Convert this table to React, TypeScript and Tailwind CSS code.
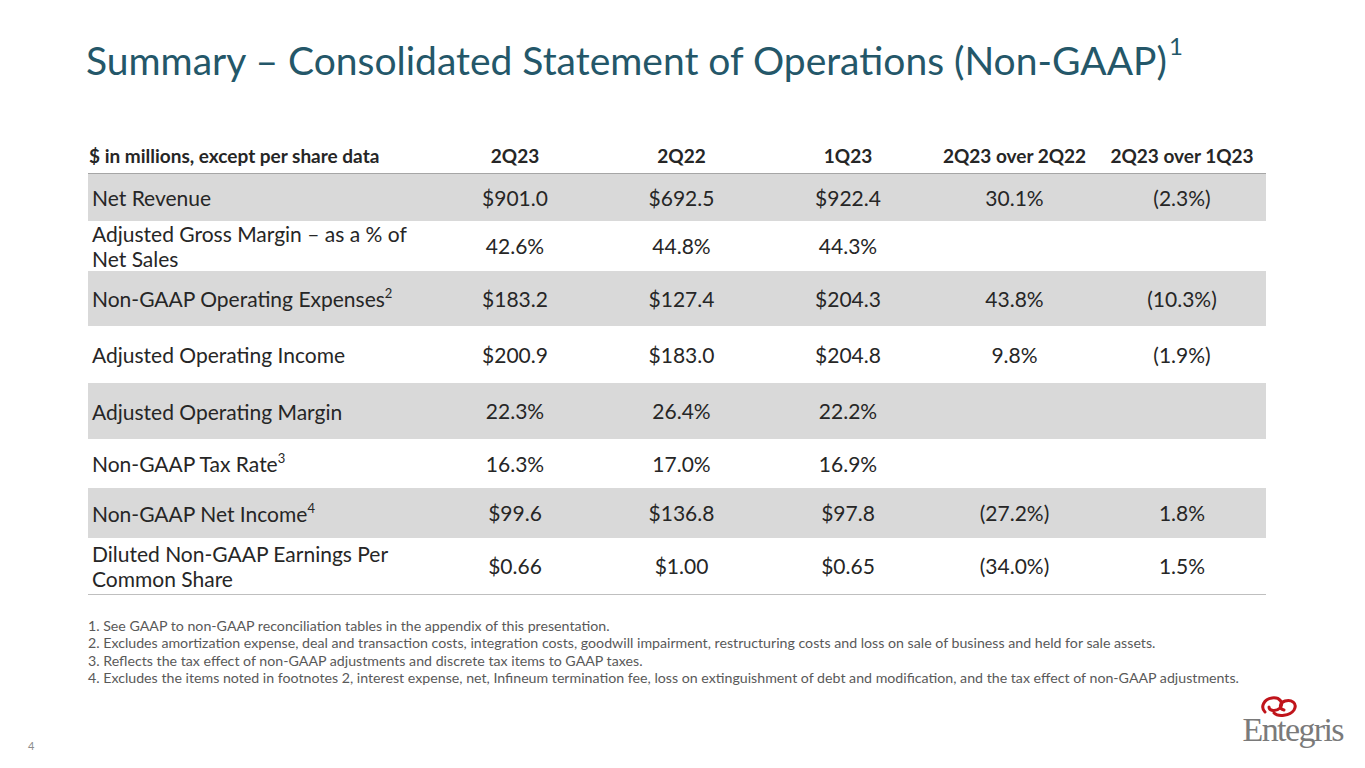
import React from "react";

type Row = {
  label: React.ReactNode;
  values: string[];
  shaded: boolean;
  height: string;
};

const rows: Row[] = [
  { label: "Net Revenue", values: ["$901.0", "$692.5", "$922.4", "30.1%", "(2.3%)"], shaded: true, height: "h-[48px]" },
  {
    label: (
      <>
        Adjusted Gross Margin – as a % of
        <br />
        Net Sales
      </>
    ),
    values: ["42.6%", "44.8%", "44.3%", "", ""],
    shaded: false,
    height: "h-[50px]",
  },
  {
    label: (
      <>
        Non-GAAP Operating Expenses<sup className="relative -top-[9px] text-[13px]">2</sup>
      </>
    ),
    values: ["$183.2", "$127.4", "$204.3", "43.8%", "(10.3%)"],
    shaded: true,
    height: "h-[55px]",
  },
  { label: "Adjusted Operating Income", values: ["$200.9", "$183.0", "$204.8", "9.8%", "(1.9%)"], shaded: false, height: "h-[57px]" },
  { label: "Adjusted Operating Margin", values: ["22.3%", "26.4%", "22.2%", "", ""], shaded: true, height: "h-[56px]" },
  {
    label: (
      <>
        Non-GAAP Tax Rate<sup className="relative -top-[9px] text-[13px]">3</sup>
      </>
    ),
    values: ["16.3%", "17.0%", "16.9%", "", ""],
    shaded: false,
    height: "h-[49px]",
  },
  {
    label: (
      <>
        Non-GAAP Net Income<sup className="relative -top-[9px] text-[13px]">4</sup>
      </>
    ),
    values: ["$99.6", "$136.8", "$97.8", "(27.2%)", "1.8%"],
    shaded: true,
    height: "h-[50px]",
  },
  {
    label: (
      <>
        Diluted Non-GAAP Earnings Per
        <br />
        Common Share
      </>
    ),
    values: ["$0.66", "$1.00", "$0.65", "(34.0%)", "1.5%"],
    shaded: false,
    height: "h-[56px]",
  },
];

const headers = ["2Q23", "2Q22", "1Q23", "2Q23 over 2Q22", "2Q23 over 1Q23"];

const footnotes = [
  "1. See GAAP to non-GAAP reconciliation tables in the appendix of this presentation.",
  "2. Excludes amortization expense, deal and transaction costs, integration costs, goodwill impairment, restructuring costs and loss on sale of business and held for sale assets.",
  "3. Reflects the tax effect of non-GAAP adjustments and discrete tax items to GAAP taxes.",
  "4. Excludes the items noted in footnotes 2, interest expense, net, Infineum termination fee, loss on extinguishment of debt and modification, and the tax effect of non-GAAP adjustments.",
];

function EntegrisLogo() {
  return (
    <div className="flex flex-col items-center">
      {/* red interlocking loops mark */}
      <svg width="40" height="22" viewBox="0 0 40 22" fill="none" className="mr-[28px]">
        <path
          d="M6 17 C1 12 5 4 13 3 C21 2 25 8 21 13 C17 17 10 16 10 12"
          stroke="#c0141b"
          strokeWidth="3"
          strokeLinecap="round"
        />
        <path
          d="M15 18 C19 22 31 21 35 15 C39 8 32 4 26 6 C20 8 20 14 25 15"
          stroke="#c0141b"
          strokeWidth="3"
          strokeLinecap="round"
        />
      </svg>
      <div className="-mt-[2px] font-['Liberation_Serif',serif] text-[34px] leading-[30px] tracking-[-1.6px] text-[#7a7a7a]">
        Entegris
      </div>
    </div>
  );
}

export default function App() {
  return (
    <div className="relative h-[768px] w-[1365px] overflow-hidden bg-white font-['Lato','Open_Sans',sans-serif] text-[#262626]">
      <h1 className="pl-[86px] pt-[36px] text-[39px] font-normal leading-[48px] text-[#245769]">
        Summary – Consolidated Statement of Operations (Non-GAAP)
        <sup className="relative -top-[20px] ml-[2px] text-[24px]">1</sup>
      </h1>

      <table className="ml-[88px] mt-[58px] w-[1178px] table-fixed border-collapse">
        <colgroup>
          <col className="w-[344px]" />
          <col className="w-[166px]" />
          <col className="w-[167px]" />
          <col className="w-[166px]" />
          <col className="w-[167px]" />
          <col className="w-[168px]" />
        </colgroup>
        <thead>
          <tr className="h-[29px] border-b border-[#a6a6a6] align-bottom text-[19px] font-bold">
            <th className="pb-[2px] pl-[1px] text-left">$ in millions, except per share data</th>
            {headers.map((h) => (
              <th key={h} className="whitespace-nowrap pb-[2px] text-center">
                {h}
              </th>
            ))}
          </tr>
        </thead>
        <tbody>
          {rows.map((r, i) => (
            <tr
              key={i}
              className={`${r.height} text-[21px] ${r.shaded ? "bg-[#d9d9d9]" : "bg-white"} ${
                i === rows.length - 1 ? "border-b border-[#bfbfbf]" : ""
              }`}
            >
              <td className="pl-[4px] leading-[25px]">{r.label}</td>
              {r.values.map((v, j) => (
                <td key={j} className="text-center">
                  {v}
                </td>
              ))}
            </tr>
          ))}
        </tbody>
      </table>

      <div className="ml-[88px] mt-[22px] flex flex-col text-[14.2px] leading-[17.6px] text-[#595959]">
        {footnotes.map((f) => (
          <div key={f} className="whitespace-nowrap">
            {f}
          </div>
        ))}
      </div>

      <div className="absolute left-[28px] top-[738px] text-[11px] text-[#8c8c8c]">4</div>

      <div className="absolute right-[22px] top-[695px]">
        <EntegrisLogo />
      </div>
    </div>
  );
}
